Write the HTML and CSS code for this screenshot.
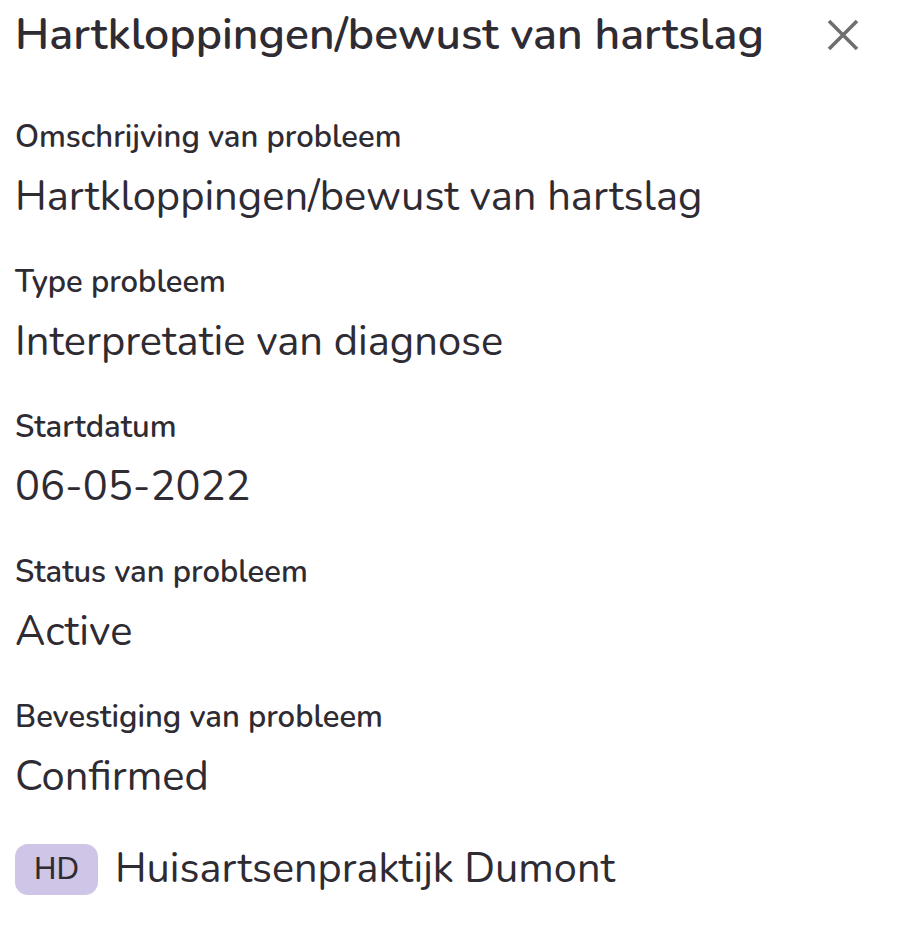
FILE: index.html
```html
<!DOCTYPE html>
<html lang="nl">
<head>
<meta charset="utf-8">
<link rel="stylesheet" href="styles.css">
</head>
<body>
<div class="panel">
  <header class="head">
    <h1 class="title">Hartkloppingen/bewust van hartslag</h1>
    <button class="close" aria-label="Sluiten">
      <svg width="32" height="32" viewBox="0 0 32 32"><path d="M2 2 L30 30 M30 2 L2 30" stroke="#6f6f6f" stroke-width="3.6" fill="none"/></svg>
    </button>
  </header>
  <dl class="fields">
    <div class="field"><dt class="label">Omschrijving van probleem</dt><dd class="value">Hartkloppingen/bewust van hartslag</dd></div>
    <div class="field"><dt class="label">Type probleem</dt><dd class="value">Interpretatie van diagnose</dd></div>
    <div class="field"><dt class="label">Startdatum</dt><dd class="value">06-05-2022</dd></div>
    <div class="field"><dt class="label">Status van probleem</dt><dd class="value">Active</dd></div>
    <div class="field"><dt class="label">Bevestiging van probleem</dt><dd class="value">Confirmed</dd></div>
  </dl>
  <div class="source">
    <span class="badge">HD</span>
    <span class="source-name">Huisartsenpraktijk Dumont</span>
  </div>
</div>
</body>
</html>
```

FILE: styles.css
```css
* { box-sizing: border-box; }
html, body { margin: 0; padding: 0; background: #ffffff; }
body {
  font-family: "Nunito", "Open Sans", "Noto Sans", sans-serif;
  color: #2f2b33;
}
.panel { padding: 0 15px; }
.head {
  display: flex;
  align-items: flex-start;
  justify-content: space-between;
  padding-top: 5px;
}
.title {
  margin: 0;
  font-size: 44.6px;
  line-height: 60px;
  font-weight: 600;
}
.close {
  background: none;
  border: 0;
  padding: 0;
  margin: 14px 24px 0 0;
  width: 32px;
  height: 32px;
  display: flex;
}
.fields {
  margin: 52px 0 0;
  display: flex;
  flex-direction: column;
  gap: 37px;
}
.field { margin: 0; }
.label {
  font-size: 31px;
  font-weight: 600;
  line-height: 40px;
}
.value {
  margin: 12px 0 0;
  font-size: 41.7px;
  line-height: 56px;
}
.source {
  display: flex;
  align-items: center;
  gap: 17px;
  margin-top: 36px;
}
.badge {
  display: inline-flex;
  align-items: center;
  justify-content: center;
  width: 83px;
  height: 51px;
  border-radius: 13px;
  background: #cfc5e7;
  font-family: "Liberation Sans", Arial, sans-serif;
  font-size: 31px;
  color: #2f2b33;
}
.source-name {
  font-size: 41.5px;
  line-height: 56px;
}
```
